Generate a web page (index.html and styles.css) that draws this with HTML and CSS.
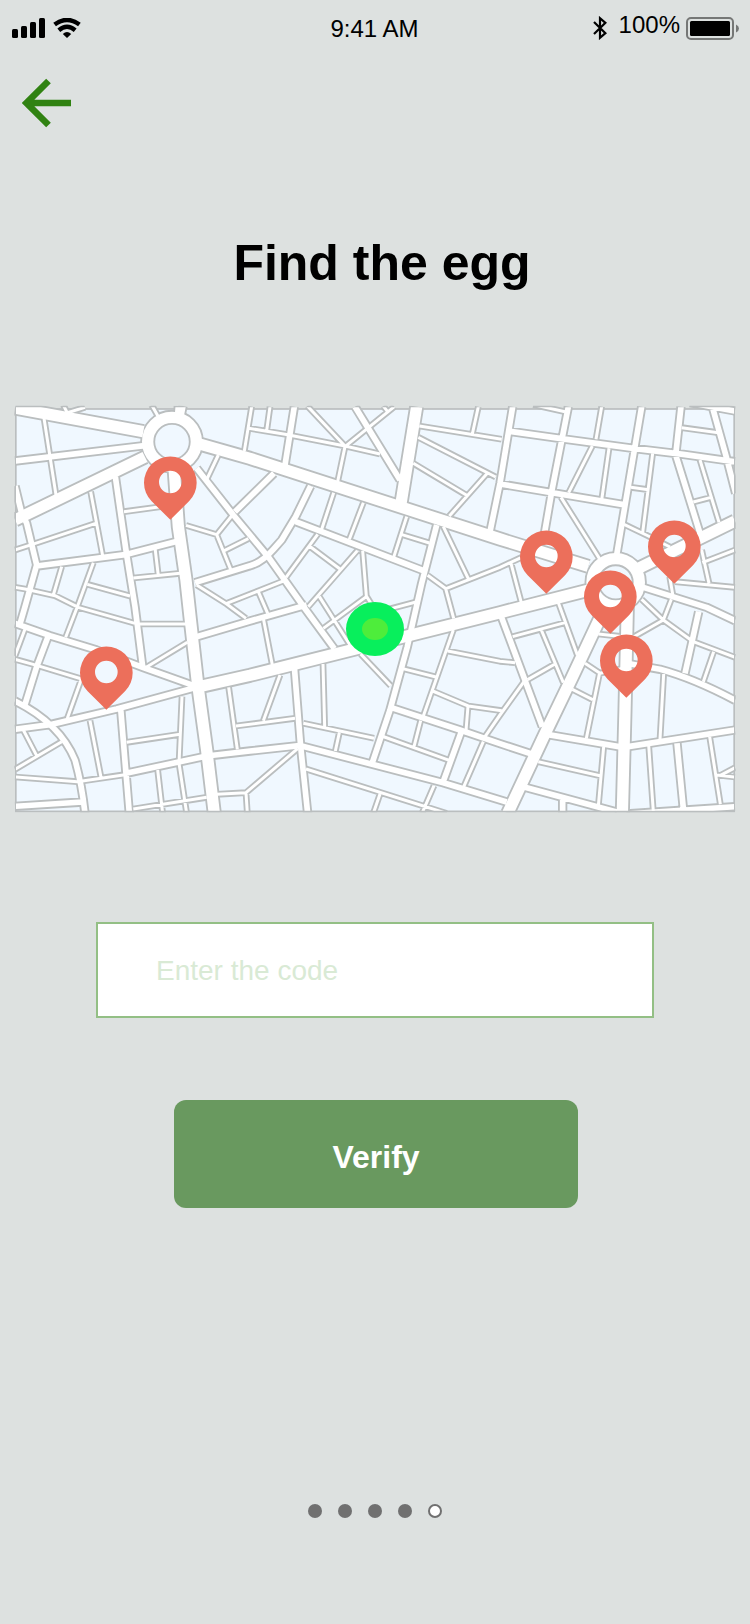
FILE: index.html
```html
<!DOCTYPE html>
<html lang="en">
<head>
<meta charset="utf-8">
<title>Find the egg</title>
<link rel="stylesheet" href="styles.css">
</head>
<body>
<div class="screen">
  <header class="status">
    <div class="status-left">
      <svg class="signal" viewBox="0 0 33 20"><rect x="0" y="11" width="6" height="9" rx="1.5"/><rect x="9" y="8" width="6" height="12" rx="1.5"/><rect x="18" y="4" width="6" height="16" rx="1.5"/><rect x="27" y="0" width="6" height="20" rx="1.5"/></svg>
      <svg class="wifi" viewBox="0 0 28 20"><path d="M1.6 6.6Q14-2.8 26.4 6.6" class="wave"/><path d="M5.8 12.2Q14 5.4 22.2 12.2" class="wave"/><path d="M9.8 16Q14 12 18.2 16L14 20Z"/></svg>
    </div>
    <div class="time">9:41 AM</div>
    <div class="status-right">
      <svg class="bluetooth" viewBox="0 0 14 24"><path d="M1 6L12.4 17.2L7 21.8V2.2L12.4 6.8L1 18"/></svg>
      <span class="percent">100%</span>
      <svg class="battery" viewBox="0 0 54 24"><rect x="1" y="1" width="46" height="21" rx="4" class="shell"/><rect x="4" y="4" width="40" height="15" rx="1.5"/><path d="M50 7.5Q53 9 53 11.5T50 15.5Z" class="nub"/></svg>
    </div>
  </header>
  <a class="back" href="#" aria-label="Back"><svg viewBox="0 0 50 50"><path d="M26.5 3L4.5 25L26.5 47M4 25H49"/></svg></a>
  <h1 class="title">Find the egg</h1>
  <svg class="map" viewBox="42 15 2166 1224">
    <defs>
      <clipPath id="outer"><rect x="43" y="17" width="2164" height="1220"/></clipPath>
      <clipPath id="inner"><rect x="48" y="22" width="2154" height="1210"/></clipPath>
      <g id="roads">
        <path class="wide" d="M45 24L430 95M595 131L750 175L1500 417L1765 499M45 360L435 171M522 200L535 380L558 540L570 650L592 845L620 1050L643 1240M590 862L750 826L1500 638L1782 566M1250 20L1203 310M1905 510L2205 363M1882 620L1875 930L1867 1240M1817 618L1715 835L1638 995L1523 1240"/>
        <circle class="wide" cx="516" cy="125" r="73"/>
        <circle class="wide" cx="1847" cy="547" r="71"/>
        <path class="mid" d="M541 58L549 18M532 56L535 18M45 183L440 136M45 258L65 340L80 370L110 495L75 620L60 672M110 498L375 464L535 423M346 230L380 465L405 620L428 800M45 670L150 707L290 750L430 803L590 860M145 707L110 800L75 913M45 988L150 974L350 927L595 860M45 903Q180 970 225 1080Q245 1150 255 1240M45 1219L248 1206M362 925L378 1120L388 1240M378 1120L620 1068L750 1053L905 1036M590 710L750 663L920 615M585 548L750 497Q785 488 820 448L845 420L887 350L932 258M590 205L700 345L808 475L918 630L1003 746M705 335L822 220M883 20L855 195M1065 20L1200 240M1538 20L1500 250L1470 395M1530 94L1700 118L1900 145L2050 163L2205 185M1500 252L1870 314M1705 20L1656 270L1630 420M1925 20L1850 465M2043 20L2027 165L2100 400M2137 20L2180 175L2207 280M2070 8L2205 33M1930 562L2120 622L2205 662M1502 645L1627 980M1310 375L1265 550L1222 740L1170 930L1117 1088M1172 922L1380 990L1500 1031L1595 1062M1384 995L1330 1144M905 1038L1125 1095L1330 1148L1520 1206M883 800L902 1040L923 1240M887 365L1273 513M1640 1003L1870 1042L2205 990M1880 790L1980 808Q2080 835 2205 901M2096 635L2055 820M1575 1162L1850 1236M1688 1195V1240M2031 1030L2050 1225M1880 1242L2205 1220"/>
        <path class="lane" d="M455 15L475 50M190 15L205 45M190 42L255 22M132 55L168 285M45 450L95 434L287 370M272 275L308 467M372 335L520 315M400 534L540 520M465 443L475 528M280 488L232 620L197 712M185 500L160 585M45 562L75 567L165 587L235 622L405 670M262 553L390 588M77 682L45 768M45 778L110 796L245 837M245 835L202 955M70 990L110 1067M45 1108L185 1025M45 1131L232 1145L375 1124M270 962L303 1132M380 1027L540 1003M546 890L537 1090L560 1240M473 1110L488 1240M400 1227L620 1192M650 1183L738 1178L893 1046M738 1178L742 1240M686 862L712 1048M708 978L885 955M420 672H560M562 727L440 801M655 165L618 243M558 376L650 404L695 348M650 404L692 508M673 452L745 416M590 555L680 612L738 655M680 610L850 543M775 575L803 640M790 655L817 795M755 20L733 153M742 84L855 103L1035 138L1140 162M810 20L800 92M922 18L1035 138M1183 20L1035 140M1150 18L1165 38M1035 140L1013 245M1258 78L1505 118M1435 20L1417 102M1255 112L1487 231M1240 190L1400 286M1460 222L1348 348M1600 14L1695 35M1805 20L1788 118M1777 138L1706 278M1827 145L1805 300M1683 292L1798 475M2045 83L2155 98M1958 160L1928 398M1893 262L1945 269M1872 373L1945 408L2010 441M2100 180L2157 367M2080 306L2130 293M2105 450L2127 550M2107 488L2205 450M2025 545L2205 562M2009 530L2019 588M1925 598L1990 660L2080 725L2205 772M1990 660L2014 598M1990 660L1895 714M1538 710L1695 668M1624 690L1690 848M1583 839L1665 792M1674 605L1732 765M1572 845L1500 945L1455 1010M1545 788L1500 784L1343 753M1360 690L1270 948M1337 566L1361 655M1283 526L1338 566L1500 502L1565 472M1330 380L1406 538M1533 490L1564 608M1205 805L1308 831M1298 873L1405 918L1505 932M1404 918L1398 992M1262 962L1242 1040M1145 1008L1348 1081M1450 1025L1390 1163M918 1107L1340 1240M1140 1182L1120 1240M1302 1157L1266 1240M840 825L790 962M969 792L974 980M910 970L1122 1015M1018 998L1006 1053M1082 762L1172 857M1001 278L965 388M1090 308L1048 418M1220 350L1180 475M1206 404L1288 429M953 403L858 532M928 438L1020 507M1072 452L925 620M1088 452L1099 588L1125 630M1099 590L970 685M958 590L1050 735M1165 628L1248 606M1755 790L1800 820L1870 805M1799 818L1759 1015M1717 868L1778 899M1795 702L1870 710M2141 755L2110 845M1991 822L1980 1018M1615 1085L1800 1127M1811 1040L1795 1218M1946 1035L1960 1235M2129 1010L2161 1213M2150 1125L2205 1131M2160 1127L2205 1103"/>
      </g>
      <path id="pin" fill-rule="evenodd" d="M0 113L-56 58A79 79 0 1 1 56 58ZM34 0A34 34 0 1 0-34 0A34 34 0 1 0 34 0Z"/>
    </defs>
    <rect class="land" x="47.5" y="27" width="2155" height="1207"/>
    <g clip-path="url(#outer)"><use href="#roads" class="edges"/></g>
    <g clip-path="url(#inner)"><use href="#roads" class="surface"/></g>
    <g class="pins">
      <use href="#pin" x="511" y="246"/><use href="#pin" x="319" y="816"/><use href="#pin" x="1639" y="468"/><use href="#pin" x="2023" y="438"/><use href="#pin" x="1831" y="588"/><use href="#pin" x="1879" y="780"/>
    </g>
    <ellipse class="spot" cx="1125" cy="687" rx="87" ry="81"/>
    <ellipse class="spot-core" cx="1125" cy="687" rx="39" ry="33"/>
  </svg>
  <input class="code" type="text" placeholder="Enter the code">
  <button class="verify">Verify</button>
  <nav class="dots"><i class="dot"></i><i class="dot"></i><i class="dot"></i><i class="dot"></i><i class="dot current"></i></nav>
</div>
</body>
</html>
```
FILE: styles.css
```css
* { box-sizing: border-box; }
body { margin: 0; background: #dde1e0; font-family: "Liberation Sans", Arial, sans-serif; color: #000; }
.screen { width: 750px; height: 1624px; display: flex; flex-direction: column; align-items: center; overflow: hidden; }
svg { display: block; flex: none; }

.status { width: 100%; height: 56px; padding: 0 10px 0 12px; display: grid; grid-template-columns: 1fr auto 1fr; align-items: center; font-size: 24px; line-height: 28px; }
.status-left { display: flex; gap: 8px; }
.signal { width: 33px; height: 20px; }
.wifi { width: 28px; height: 20px; }
.wave { fill: none; stroke: #000; stroke-width: 4.4; }
.time { padding: 1px 3px 0 0; }
.status-right { display: flex; justify-content: flex-end; align-items: center; }
.bluetooth { width: 14px; height: 24px; margin-right: 12px; }
.bluetooth path { fill: none; stroke: #000; stroke-width: 2.2; }
.percent { margin: -6px 6px 0 0; }
.battery { width: 54px; height: 24px; margin-top: 2px; }
.shell { fill: none; stroke: #757776; stroke-width: 2; }
.nub { fill: #757776; }

.back { align-self: flex-start; margin: 21.5px 0 0 22px; }
.back svg { width: 50px; height: 50px; }
.back path { fill: none; stroke: #308212; stroke-width: 6.6; }

.title { margin: 107.5px 0 0 14px; font-size: 50px; line-height: 56px; font-weight: 700; }

.map { width: 722px; height: 408px; margin-top: 114px; }
.land { fill: #f0f8ff; stroke: #babebf; stroke-width: 5; }
.wide { --road: 34px; }
.mid { --road: 17px; }
.lane { --road: 9px; }
.wide, .mid, .lane { fill: none; stroke-width: calc(var(--road) + var(--edge)); stroke-linejoin: round; }
.edges { --edge: 11px; stroke: #babebf; }
.surface { --edge: 0px; stroke: #fff; }
.pins { fill: #ec6f5b; }
.spot { fill: #08ef5c; }
.spot-core { fill: #4eed3b; }

.code { width: 558px; height: 96px; margin-top: 109px; padding: 2px 58px 0; border: 2px solid #93bf85; border-radius: 0; background: #fff; font: 28px/32px "Liberation Sans", Arial, sans-serif; outline: 0; }
.code::placeholder { color: #d9ead5; opacity: 1; }
.verify { width: 404px; height: 108px; margin: 82px 0 0 2px; padding: 5px 0 0; border: 0; border-radius: 12px; background: #69995f; color: #fff; font: 700 32px/36px "Liberation Sans", Arial, sans-serif; }
.dots { display: flex; gap: 16px; margin-top: 296px; }
.dot { width: 14px; height: 14px; border-radius: 50%; background: #707070; }
.current { background: #fff; border: 2px solid #707070; }
```
